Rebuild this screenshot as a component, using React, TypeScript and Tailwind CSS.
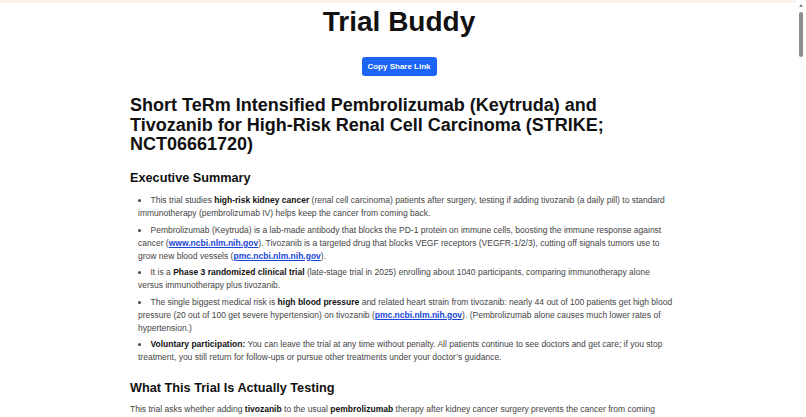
import React from "react";

const Link = ({ children }: { children: React.ReactNode }) => (
  <a href="#" className="font-bold text-[#1846d8] underline">
    {children}
  </a>
);

export default function App() {
  return (
    <div className="flex min-h-screen bg-white font-['Liberation_Sans',Arial,sans-serif] text-[#444]">
      <main className="flex-1 border-t-[3px] border-[#fdf1ee]">
        <div className="mx-auto max-w-[600px] pl-8 pr-6 pb-10">
          <h1 className="text-center text-[28px] leading-[34px] font-bold text-[#111] mt-[2px] ml-[-6px]">
            Trial Buddy
          </h1>
          <div className="flex justify-center mt-[18px] ml-[-6px]">
            <button className="h-[19px] w-[75px] rounded-[3px] bg-[#1b64f5] text-[8px] font-bold text-white">
              Copy Share Link
            </button>
          </div>

          <h2 className="mt-[20px] text-[18px] leading-[19.5px] font-bold text-[#111] pr-2">
            Short TeRm Intensified Pembrolizumab (Keytruda) and Tivozanib for High-Risk Renal Cell Carcinoma (STRIKE;
            NCT06661720)
          </h2>

          <h3 className="mt-[15px] text-[12.7px] leading-[16px] font-bold text-[#111]">Executive Summary</h3>
          <ul className="mt-[8.5px] pl-2 list-disc list-inside text-[8.5px] leading-[13px] space-y-[3.5px]">
            <li>
              This trial studies <b className="text-[#111]">high-risk kidney cancer</b> (renal cell carcinoma) patients
              after surgery, testing if adding tivozanib (a daily pill) to standard immunotherapy (pembrolizumab IV) helps
              keep the cancer from coming back.
            </li>
            <li>
              Pembrolizumab (Keytruda) is a lab-made antibody that blocks the PD-1 protein on immune cells, boosting the
              immune response against cancer (<Link>www.ncbi.nlm.nih.gov</Link>). Tivozanib is a targeted drug that
              blocks VEGF receptors (VEGFR-1/2/3), cutting off signals tumors use to grow new blood vessels (
              <Link>pmc.ncbi.nlm.nih.gov</Link>).
            </li>
            <li>
              It is a <b className="text-[#111]">Phase 3 randomized clinical trial</b> (late-stage trial in 2025)
              enrolling about 1040 participants, comparing immunotherapy alone versus immunotherapy plus tivozanib.
            </li>
            <li>
              The single biggest medical risk is <b className="text-[#111]">high blood pressure</b> and related heart
              strain from tivozanib: nearly 44 out of 100 patients get high blood pressure (20 out of 100 get severe
              hypertension) on tivozanib (<Link>pmc.ncbi.nlm.nih.gov</Link>). (Pembrolizumab alone causes much lower
              rates of hypertension.)
            </li>
            <li>
              <b className="text-[#111]">Voluntary participation:</b> You can leave the trial at any time without
              penalty. All patients continue to see doctors and get care; if you stop treatment, you still return for
              follow-ups or pursue other treatments under your doctor’s guidance.
            </li>
          </ul>

          <h3 className="mt-[15.5px] text-[12.7px] leading-[16px] font-bold text-[#111]">
            What This Trial Is Actually Testing
          </h3>
          <p className="mt-[7.5px] text-[8.5px] leading-[13px]">
            This trial asks whether adding <b className="text-[#111]">tivozanib</b> to the usual{" "}
            <b className="text-[#111]">pembrolizumab</b> therapy after kidney cancer surgery prevents the cancer from
            coming back. Researchers compare how long patients stay cancer-free in each group.
          </p>
        </div>
      </main>
      <aside className="w-[10px] shrink-0 flex flex-col items-center pt-[4px]">
        <div className="h-0 w-0 border-x-[2.5px] border-b-[3px] border-x-transparent border-b-[#8a8a8a]" />
        <div className="mt-[5px] h-[45px] w-[4px] rounded-full bg-[#8c8c8c]" />
      </aside>
    </div>
  );
}
